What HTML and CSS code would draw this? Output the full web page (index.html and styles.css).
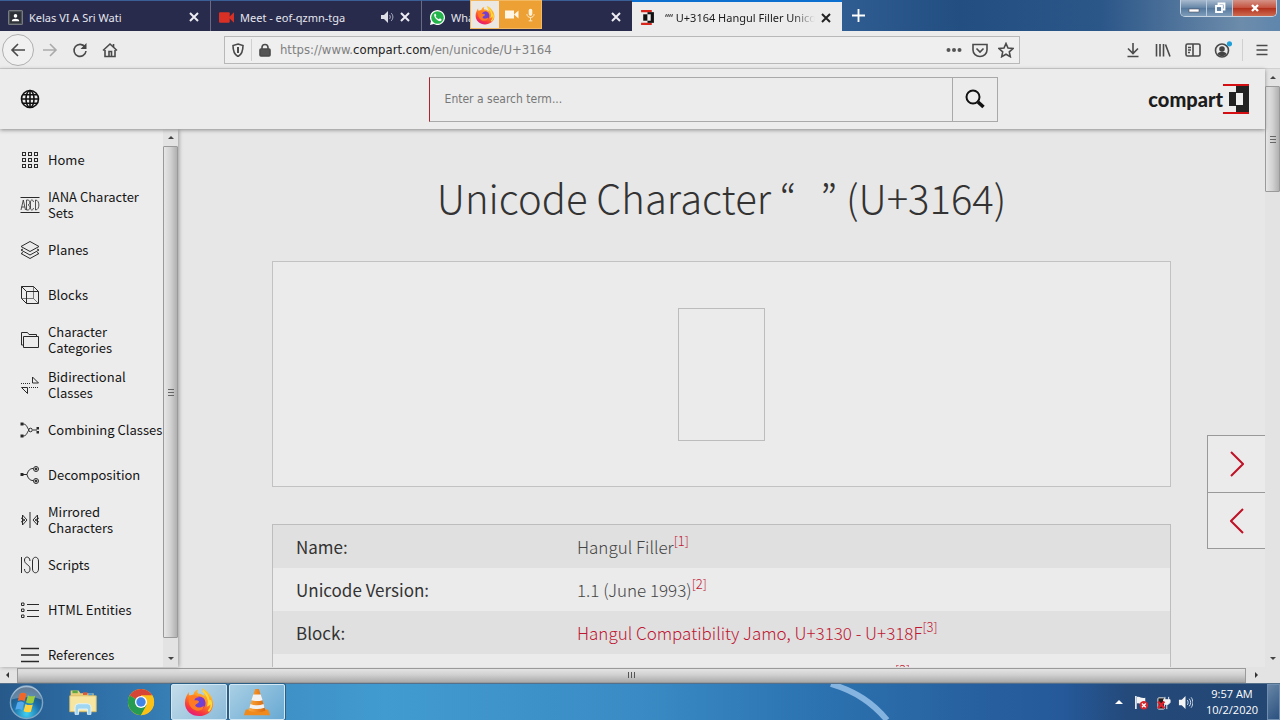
FILE: index.html
```html
<!DOCTYPE html>
<html lang="en">
<head>
<meta charset="utf-8">
<title>U+3164 Hangul Filler Unicode Character</title>
<link rel="stylesheet" href="styles.css">
</head>
<body>
<svg class="defs" width="0" height="0" aria-hidden="true">
  <defs>
    <linearGradient id="fxBody" x1="0.8" y1="0" x2="0.3" y2="1">
      <stop offset="0" stop-color="#ffd93a"/><stop offset="0.45" stop-color="#ff8a1f"/><stop offset="0.8" stop-color="#f7373f"/><stop offset="1" stop-color="#e31587"/>
    </linearGradient>
    <radialGradient id="fxGlobe"><stop offset="0" stop-color="#5a4be0"/><stop offset="1" stop-color="#8a35c4"/></radialGradient>
    <radialGradient id="orb" cx="0.5" cy="0.85" r="0.85"><stop offset="0" stop-color="#3fd0f2"/><stop offset="0.5" stop-color="#1c6ea8"/><stop offset="1" stop-color="#2a4566"/></radialGradient>
    <linearGradient id="cone" x1="0" x2="1"><stop offset="0" stop-color="#ffab3d"/><stop offset="1" stop-color="#d96508"/></linearGradient>
    <symbol id="firefox" viewBox="0 0 32 32">
      <path d="M5 5c0 2 0 3 1 4l4-1c1-3 3-5 5-5-1 2-1 3 0 4 3 0 5 1 7 3 0-4-2-6-3-9 6 3 12 9 12 17 0 8-7 13-15 13S1 25 1 17C1 12 3 9 5 5z" fill="url(#fxBody)"/>
      <circle cx="16" cy="17" r="7" fill="url(#fxGlobe)"/>
      <path d="M5 11c3-3 8-3 11 0-3 0-4 1-5 3 3 0 5 0 5 2-1 2-4 2-4 4 2 3 7 2 9 0 0 4-4 6-8 5-5-1-9-6-8-14z" fill="#ff7a22"/>
      <path d="M20 4c4 3 8 9 6 15 2-1 2-3 2-5 2 4 1 9-2 12" fill="none" stroke="#ffd93a" stroke-width="2"/>
    </symbol>
  </defs>
</svg>

<header class="tabstrip">
  <div class="tabs" role="tablist">
    <div class="tab" role="tab">
      <svg class="fav" viewBox="0 0 14 14"><rect x=".5" y=".5" width="13" height="13" rx="1" fill="#4a4e55" stroke="#777b80"/><rect x="2" y="2" width="10" height="10" fill="#2c2f36"/><circle cx="7" cy="5.500" r="1.700" fill="#fff"/><path d="M3.500 10.500c0-3 7-3 7 0z" fill="#fff"/></svg>
      <span class="tab-title">Kelas VI A Sri Wati</span>
      <button class="close" aria-label="Close tab"><svg viewBox="0 0 10 10"><path d="M1 1l8 8M9 1l-8 8"/></svg></button>
    </div>
    <div class="tab" role="tab">
      <svg class="fav" viewBox="0 0 14 14"><rect x="0" y="2" width="10" height="10" rx="1" fill="#d93025"/><path d="M9 7l5-5v10z" fill="#d93025"/></svg>
      <span class="tab-title">Meet - eof-qzmn-tga</span>
      <button class="sound" aria-label="Mute tab"><svg viewBox="0 0 14 12"><path d="M1 4h3l4-4v12l-4-4H1z" fill="#dcdde6"/><path d="M9.500 4c1 1 1 3 0 4M11 2c2.500 2 2.500 6 0 8" fill="none" stroke="#a9abc0"/></svg></button>
      <button class="close" aria-label="Close tab"><svg viewBox="0 0 10 10"><path d="M1 1l8 8M9 1l-8 8"/></svg></button>
    </div>
    <div class="tab" role="tab">
      <svg class="fav" viewBox="0 0 16 16"><path d="M0 16l1-4a8 8 0 1 1 3 3z" fill="#fff"/><circle cx="8" cy="8" r="6.700" fill="#25b34b"/><path d="M5 4c-2 2 2 8 6 8 1.500-.5 1.500-2 1-2.500l-1.500-.7-1 1C8 9.500 6.500 8 6 7l.7-1L6 4z" fill="#fff"/></svg>
      <span class="tab-title">WhatsApp</span>
      <button class="close" aria-label="Close tab"><svg viewBox="0 0 10 10"><path d="M1 1l8 8M9 1l-8 8"/></svg></button>
      <div class="sharing">
        <span class="sharing-app"><svg viewBox="0 0 32 32"><use href="#firefox"/></svg></span>
        <svg class="cam" viewBox="0 0 14 10"><path d="M0 1h9v8H0zM9 5l4.500-4v8z" fill="#fff6e6"/></svg>
        <svg class="mic" viewBox="0 0 10 14"><rect x="3" y="0" width="4" height="8" rx="2" fill="#fff0d6"/><path d="M1 6c0 5 8 5 8 0M5 10v3M3 13.500h4" fill="none" stroke="#fff0d6"/></svg>
      </div>
    </div>
    <div class="tab active" role="tab" aria-selected="true">
      <svg class="fav" viewBox="0 0 14 14"><path d="M1 1h10M1 13h10" stroke="#d9261c" stroke-width="2"/><path d="M7 2h6v10H7z" fill="#111"/><path d="M3 4h4v6H3z" fill="#111"/><path d="M7 4h3v6H7z" fill="#eee"/></svg>
      <span class="tab-title">““ U+3164 Hangul Filler Unicode</span>
      <button class="close" aria-label="Close tab"><svg viewBox="0 0 10 10"><path d="M1 1l8 8M9 1l-8 8"/></svg></button>
    </div>
  </div>
  <button class="newtab" aria-label="New tab"><svg viewBox="0 0 14 14"><path d="M7 0v14M0 7h14" stroke="#fff" stroke-width="2"/></svg></button>
  <div class="winbtns">
    <button class="win" aria-label="Minimize"><svg viewBox="0 0 14 12"><rect x="2" y="7" width="10" height="3" fill="#fff" stroke="#556" stroke-width=".6"/></svg></button>
    <button class="win" aria-label="Restore"><svg viewBox="0 0 14 12"><path d="M5.500 3V1.500h6v6H10M3 4h6v6H3z" fill="none" stroke="#fff" stroke-width="1.800"/></svg></button>
    <button class="win quit" aria-label="Close"><svg viewBox="0 0 14 12"><path d="M4 3l6 6M10 3l-6 6" stroke="#fff" stroke-width="2.400"/></svg></button>
  </div>
</header>

<nav class="toolbar" aria-label="Browser">
  <div class="tool-left">
    <button class="back" aria-label="Back"><svg viewBox="0 0 16 16"><path d="M15 8H2M8 2L2 8l6 6"/></svg></button>
    <button class="tool faded" aria-label="Forward"><svg viewBox="0 0 16 16"><path d="M1 8h13M8 2l6 6-6 6"/></svg></button>
    <button class="tool" aria-label="Reload"><svg viewBox="0 0 16 16"><path d="M13 5a6 6 0 1 0 1 4"/><path d="M14.500 1v6h-6z" fill="#444" stroke="none"/></svg></button>
    <button class="tool" aria-label="Home"><svg viewBox="0 0 16 16"><path d="M1 8.500L8 2l7 6.500M3 8v6.500h10V8"/><path d="M7 14V9.500h2.500V14M11.500 2v3"/></svg></button>
  </div>
  <div class="urlbar">
    <svg class="ui" viewBox="0 0 14 14"><path d="M7 1l5 1.500c0 6-1 9-5 11-4-2-5-5-5-11z"/><path d="M7 4v6" stroke-width="2"/></svg>
    <span class="vsep"></span>
    <svg class="ui" viewBox="0 0 14 14"><rect x="2" y="6" width="10" height="7" rx="1" fill="#555"/><path d="M4 6V4.500a3 3 0 0 1 6 0V6"/></svg>
    <span class="url">https://www.<b>compart.com</b>/en/unicode/U+3164</span>
    <button class="mini wide" aria-label="Page actions"><svg viewBox="0 0 16 16"><g fill="#555" stroke="none"><circle cx="2.500" cy="8" r="2"/><circle cx="8" cy="8" r="2"/><circle cx="13.500" cy="8" r="2"/></g></svg></button>
    <button class="mini" aria-label="Save to Pocket"><svg viewBox="0 0 16 16"><path d="M1 2.500h14V8a7 6.500 0 0 1-14 0zM4.500 6.500L8 10l3.500-3.500"/></svg></button>
    <button class="mini" aria-label="Bookmark"><svg viewBox="0 0 16 16"><path d="M8 1.500l2 4.500 5 .5-3.700 3.300 1 4.900L8 12.200l-4.300 2.500 1-4.900L1 6.500 6 6z"/></svg></button>
  </div>
  <div class="tool-right">
    <button class="tool" aria-label="Downloads"><svg viewBox="0 0 16 16"><path d="M8 1v10M3 6.500l5 5 5-5M2.500 14.500h11"/></svg></button>
    <button class="tool" aria-label="Library"><svg viewBox="0 0 16 16"><path d="M1.500 2v12.500M5 2v12.500M8.500 2v12.500M10.500 2.500l4.500 12"/></svg></button>
    <button class="tool" aria-label="Sidebars"><svg viewBox="0 0 16 16"><rect x="1" y="2" width="14" height="12" rx="1.500"/><path d="M8 2v12M3 5.500h3M3 8h3M3 10.500h2"/></svg></button>
    <button class="tool" aria-label="Account"><svg viewBox="0 0 18 18"><circle cx="8" cy="9.500" r="6.500"/><circle cx="8" cy="8" r="2.800" fill="#444" stroke="none"/><path d="M3.500 13c1-3 8-3 9 0-3 3-6 3-9 0z" fill="#444" stroke="none"/><circle cx="15.500" cy="2.800" r="2.600" fill="#1e9fd8" stroke="none"/></svg></button>
    <span class="vsep"></span>
    <button class="tool" aria-label="Menu"><svg viewBox="0 0 16 16"><path d="M2.500 3.500h11M2.500 8h11M2.500 12.500h11"/></svg></button>
  </div>
</nav>

<div class="viewport">
  <div class="page">
    <header class="site-head">
      <button class="lang" aria-label="Language"><svg viewBox="0 0 20 20"><circle cx="10" cy="10" r="8.500"/><ellipse cx="10" cy="10" rx="4" ry="8.500"/><path d="M10 1.500v17M1.500 10h17M3 5.800h14M3 14.200h14"/></svg></button>
      <form class="search">
        <input type="text" placeholder="Enter a search term..." aria-label="Search term">
        <button type="button" aria-label="Search"><svg viewBox="0 0 20 20"><circle cx="8" cy="8" r="6.500" fill="none" stroke="#111" stroke-width="2"/><path d="M13 13l5.500 5" stroke="#111" stroke-width="3.600"/></svg></button>
      </form>
      <a class="brand" href="#">compart<svg viewBox="0 0 26 30"><path d="M13 1h13v28H13z" fill="#222"/><path d="M0 1h26M0 29h26" stroke="#d40f14" stroke-width="2"/><path d="M6 8h7v14H6z" fill="#222"/><path d="M13 9h7v12h-7z" fill="#efefef"/></svg></a>
    </header>

    <div class="columns">
      <aside class="side">
        <nav class="side-nav">
          <a href="#"><svg viewBox="0 0 20 20"><g><rect x="2.500" y="2.500" width="3" height="3"/><rect x="8.500" y="2.500" width="3" height="3"/><rect x="14.500" y="2.500" width="3" height="3"/><rect x="2.500" y="8.500" width="3" height="3"/><rect x="8.500" y="8.500" width="3" height="3"/><rect x="14.500" y="8.500" width="3" height="3"/><rect x="2.500" y="14.500" width="3" height="3"/><rect x="8.500" y="14.500" width="3" height="3"/><rect x="14.500" y="14.500" width="3" height="3"/></g></svg><span>Home</span></a>
          <a href="#"><svg viewBox="0 0 20 20"><path d="M.5 2.500h19M.5 17.500h19"/><path stroke-width=".8" d="M1 15L3.300 5l2.200 10M1.800 12h3M6.500 5v10h1.500c2.500 0 2.500-5 0-5 2.200 0 2.200-5 0-5zM13.500 7c-.5-3-3-2.500-3 0v6c0 2.500 2.500 3 3 0M15.500 5v10c4.500 0 4.500-10 0-10z"/></svg><span>IANA Character Sets</span></a>
          <a href="#"><svg viewBox="0 0 20 20"><path d="M10 1.500l9 5-9 5-9-5zM1 10l9 5 9-5M1 13.500l9 5 9-5M1 10l2-1M19 10l-2-1M1 13.500l2-1M19 13.500l-2-1"/></svg><span>Planes</span></a>
          <a href="#"><svg viewBox="0 0 20 20"><path d="M6.500 6.500h12v12h-12zM1.500 1.500h12l5 5M1.500 1.500v12l5 5M1.500 1.500l5 5"/><path stroke-width=".6" d="M13.500 1.500v12h-12M13.500 13.500l5 5"/></svg><span>Blocks</span></a>
          <a href="#"><svg viewBox="0 0 20 20"><path d="M3.500 6.500h15v11h-15zM3.500 15H1.500V2.500h6l1.500 2h7.500v2"/></svg><span>Character Categories</span></a>
          <a href="#"><svg viewBox="0 0 20 20"><path d="M12.500 2v6h6zM1.500 12.500h6v6z"/><path stroke-dasharray="1 1" d="M1 8.500h10M9 12.500h10"/></svg><span>Bidirectional Classes</span></a>
          <a href="#"><svg viewBox="0 0 20 20"><path d="M3 4c4 0 4 4 6 6-2 2-2 6-6 6M13 10h4"/><circle cx="10.500" cy="10" r="1.800"/><g fill="#222"><rect x="1" y="3" width="2" height="2"/><rect x="1" y="15" width="2" height="2"/><rect x="17" y="7.500" width="1.500" height="1.500"/><rect x="17" y="11.500" width="1.500" height="1.500"/></g></svg><span>Combining Classes</span></a>
          <a href="#"><svg viewBox="0 0 20 20"><path d="M3 9.500h4c1-4 3-6 6-6M7 9.500c1 4 3 6 6 6"/><rect x="1" y="8.500" width="2" height="2" fill="#222"/><circle cx="16" cy="4" r="2.500"/><circle cx="16" cy="4" r="1" fill="#222"/><circle cx="16" cy="16" r="2.500"/><circle cx="16" cy="16" r="1" fill="#222"/></svg><span>Decomposition</span></a>
          <a href="#"><svg viewBox="0 0 20 20"><path d="M10 2v16M2.500 5l4.500 5-4.500 5zM17.500 5L13 10l4.500 5zM1 8l4 2-4 2M19 8l-4 2 4 2"/></svg><span>Mirrored Characters</span></a>
          <a href="#"><svg viewBox="0 0 20 20"><path d="M1.500 2v16M10 6c0-5-5.500-5-5.500-1 0 5 5.500 4 5.500 9 0 5-5.500 5-5.500 0M12.500 6c0-5 6-5 6 0v8c0 5-6 5-6 0z"/></svg><span>Scripts</span></a>
          <a href="#"><svg viewBox="0 0 20 20"><path d="M7 4.500h12M7 10.500h12M7 16.500h12"/><path d="M1.500 3h2.500v2.500H1.500zM1.500 9h2.500v2.500H1.500zM1.500 15h2.500v2.500H1.500z"/></svg><span>HTML Entities</span></a>
          <a href="#"><svg viewBox="0 0 20 20"><path d="M1 3.500h18M1 10h18M1 16.500h18" stroke-width="1.400"/></svg><span>References</span></a>
        </nav>
        <div class="vbar">
          <i class="arrow up"></i>
          <div class="vthumb long"><i></i></div>
          <i class="arrow down"></i>
        </div>
      </aside>

      <main class="content">
        <h1>Unicode Character “<span class="filler"></span>” (U+3164)</h1>
        <div class="glyph-card"><div class="glyph"></div></div>
        <table class="facts">
          <tbody>
            <tr><th scope="row">Name:</th><td>Hangul Filler<sup><a href="#">[1]</a></sup></td></tr>
            <tr><th scope="row">Unicode Version:</th><td>1.1 (June 1993)<sup><a href="#">[2]</a></sup></td></tr>
            <tr><th scope="row">Block:</th><td><a href="#">Hangul Compatibility Jamo, U+3130 - U+318F</a><sup><a href="#">[3]</a></sup></td></tr>
            <tr><th scope="row">Plane:</th><td><a href="#">Basic Multilingual Plane, U+0000 - U+FFFF</a><sup><a href="#">[3]</a></sup></td></tr>
          </tbody>
        </table>
      </main>
    </div>
    <div class="pager">
      <button aria-label="Next character"><svg viewBox="0 0 14 26"><path d="M1 1l12 12L1 25"/></svg></button>
      <button aria-label="Previous character"><svg viewBox="0 0 14 26"><path d="M13 1L1 13l12 12"/></svg></button>
    </div>
  </div>
  <div class="vbar outer">
    <i class="arrow up"></i>
    <div class="vthumb short"><i></i></div>
    <i class="arrow down"></i>
  </div>
</div>
<div class="hbar">
  <i class="arrow left"></i>
  <div class="hthumb"><i></i></div>
  <i class="arrow right"></i>
</div>

<footer class="taskbar">
  <svg class="streak" viewBox="0 0 120 37" preserveAspectRatio="none"><path d="M12 0c26 8 42 20 56 37" fill="none" stroke="#9cc6ee" stroke-width="6" opacity=".8"/></svg>
  <button class="start" aria-label="Start"><svg viewBox="0 0 36 36"><circle cx="18" cy="18" r="16.500" fill="url(#orb)" stroke="#7fa5c4" stroke-width="1.500"/><path d="M3 15a15 15 0 0 1 30 0c-8-4-20-3-30 0z" fill="#fff" opacity=".28"/><path d="M11 9c3-1.500 5-1 7 .5l-2 7.500c-2-1.500-4-2-7-.5z" fill="#f0672a"/><path d="M19.500 10.500c2 1.500 5 1.500 7.500.5l-2 7.500c-3 1-5 .5-7.500-.5z" fill="#9ccc3c"/><path d="M8.500 18c3-1.500 5-1 7 .5l-2 7.500c-2-1.500-4-2-7-.5z" fill="#54a8ec"/><path d="M17 19.500c2 1.500 5 1.500 7.500.5l-2 7.500c-3 1-5 .5-7.500-.5z" fill="#ffd23e"/></svg></button>
  <button class="task" aria-label="Explorer"><svg viewBox="0 0 34 32"><path d="M3 3h9l2 3h15v20H3z" fill="#e9cf7a"/><path d="M5 3h6v3H5z" fill="#5ba844"/><path d="M17 5h5v3h-5z" fill="#d95a3b"/><path d="M23 6h5v3h-5z" fill="#4c9bd6"/><path d="M2 9h30v18H2z" fill="#f6e6a2" stroke="#d9bb62"/><path d="M8 30v-8q0-4 4-4h10q4 0 4 4v8h-4v-6H12v6z" fill="#9fd6f2" stroke="#e5f6ff"/></svg></button>
  <button class="task" aria-label="Chrome"><svg viewBox="0 0 32 32"><circle cx="16" cy="16" r="14" fill="#fbc116"/><path d="M16 16L3.900 9A14 14 0 0 1 28.100 9H16z" fill="#d64535"/><path d="M3.900 9A14 14 0 0 0 16 30l6-10.500-6-3.500z" fill="#269b52"/><path d="M28.100 9A14 14 0 0 1 16 30l6-10.500L16 9z" fill="#fbc116"/><circle cx="16" cy="16" r="6.500" fill="#fff"/><circle cx="16" cy="16" r="5" fill="#4285e8"/></svg></button>
  <button class="task open" aria-label="Firefox"><svg viewBox="0 0 32 32"><use href="#firefox"/></svg></button>
  <button class="task open" aria-label="VLC"><svg viewBox="0 0 32 32"><path d="M4 24h24l2 6H2z" fill="#f08a1c"/><path d="M14 2h4l7 23q-9 4-18 0z" fill="url(#cone)"/><path d="M12 8h8l2 6q-6 2-12 0zM9 18q7 3 14 0l1 4q-8 3-16 0z" fill="#f2f2f2"/></svg></button>
  <div class="tray">
    <svg class="ti small" viewBox="0 0 8 8"><path d="M4 2l4 4H0z" fill="#fff"/></svg>
    <svg class="ti" viewBox="0 0 16 16"><path d="M2 1v14" stroke="#fff" stroke-width="1.600"/><path d="M3 2c4-1 4 2 9 1v7c-5 1-5-2-9-1z" fill="#f4f4f4"/><circle cx="10.500" cy="11" r="4.500" fill="#d8282c"/><path d="M8.500 9l4 4M12.500 9l-4 4" stroke="#fff" stroke-width="1.400"/></svg>
    <svg class="ti" viewBox="0 0 16 16"><rect x="2" y="3" width="7" height="12" rx="1" fill="#222" stroke="#eee"/><path d="M8 5h7v3l-2 2h-3l-2-2zM9.500 5V2M13.500 5V2M11.500 10v5" fill="#f4f4f4" stroke="#f4f4f4"/><path d="M2 7l7 7M9 7l-7 7" stroke="#e0202a" stroke-width="2.400"/></svg>
    <svg class="ti" viewBox="0 0 16 16"><path d="M1 5h3l4-4v14l-4-4H1z" fill="#f4f4f4"/><path d="M10 5.500c1 1.500 1 3.500 0 5M12 4c2 2.500 2 5.500 0 8M14 2.500c2.500 3.500 2.500 7.500 0 11" fill="none" stroke="#dfe8f2"/></svg>
    <time class="clock"><span>9:57 AM</span><span>10/2/2020</span></time>
    <button class="peek" aria-label="Show desktop"></button>
  </div>
</footer>
</body>
</html>
```
FILE: styles.css
```css
* { box-sizing: border-box; }

html, body { height: 100%; }

body {
  margin: 0;
  display: flex;
  flex-direction: column;
  overflow: hidden;
  background: #e7e7e7;
  color: #333;
  font-family: "Noto Sans CJK KR", "Open Sans", sans-serif;
}

button {
  margin: 0;
  padding: 0;
  border: 0;
  background: none;
  display: grid;
  place-items: center;
  flex: none;
}

a { color: inherit; text-decoration: none; }
svg { display: block; flex: none; }
.defs { position: absolute; }

/* Tab strip */
.tabstrip {
  flex: none;
  height: 31px;
  display: flex;
  align-items: stretch;
  background: linear-gradient(90deg, #2f5c91 66%, #224e82 75%, #2b5688 86%, #6d8cab 97%, #5f86ad);
}

.tabs { display: flex; flex: 0 1 842px; min-width: 0; }

.tab {
  position: relative;
  flex: 1 1 0;
  min-width: 0;
  display: flex;
  align-items: center;
  gap: 6px;
  padding: 2px 11px 0 8px;
  background: #282b4c;
  border-top: 1px solid #3a5f96;
  border-right: 1px solid #696b85;
  color: #e6e6ee;
  font: 11px "Noto Sans", sans-serif;
}

.tab:nth-child(3) { border-right: 0; }

.tab.active {
  background: #ececec;
  color: #1b1b1b;
  border-top: 2px solid #0a6fce;
  border-right: 0;
}

.fav { width: 15px; height: 15px; }
.active .fav { margin-right: 4px; }

.tab-title {
  flex: 1;
  min-width: 0;
  overflow: hidden;
  white-space: nowrap;
}

.active .tab-title { mask-image: linear-gradient(90deg, #000 85%, transparent); }

.close svg { width: 10px; height: 10px; stroke: #ececf2; stroke-width: 2; }
.active .close svg { stroke: #222; }
.sound svg { width: 14px; height: 12px; }

.sharing {
  position: absolute;
  left: 48px;
  top: -1px;
  height: 29px;
  width: 72px;
  display: flex;
  align-items: center;
  background: #eda135;
  border: 1px solid #f2b862;
}

.sharing-app { width: 28px; height: 27px; display: grid; place-items: center; background: #ebe7e3; }
.sharing-app svg { width: 20px; height: 20px; }
.cam { width: 14px; height: 11px; margin: 0 7px 0 6px; }
.mic { width: 9px; height: 14px; }

.newtab { width: 32px; }
.newtab svg { width: 13px; height: 13px; }

.winbtns {
  margin-left: auto;
  margin-right: 3px;
  height: 17px;
  display: flex;
  border: 1px solid #c6d4e2;
  border-top: 0;
  border-radius: 0 0 5px 5px;
  overflow: hidden;
}

.win { width: 26px; background: linear-gradient(#a9bbcf, #6484a6 50%, #54779c 51%, #7f9dba); border-right: 1px solid #b9cadb; }
.win svg { width: 14px; height: 12px; }
.quit { width: 43px; border: 0; background: linear-gradient(#d59286, #c4513d 50%, #b2301c 51%, #cd6a4f); }

/* Browser toolbar */
.toolbar {
  flex: none;
  height: 38px;
  display: flex;
  align-items: center;
  background: #ececec;
  border-bottom: 1px solid #d0d0d0;
}

.toolbar svg { fill: none; stroke: #4a4a4a; stroke-width: 1.6; }
.tool-left { display: flex; align-items: center; gap: 2px; padding-left: 2px; flex: 13 1 0; }
.tool { width: 28px; height: 28px; }
.tool svg { width: 16px; height: 16px; }
.faded { opacity: .4; }

.back {
  width: 32px;
  height: 32px;
  border: 1px solid #b0b0b0;
  border-radius: 50%;
  background: #f1f1f1;
}

.back svg { width: 16px; height: 16px; }

.urlbar {
  flex: 0 1 796px;
  height: 28px;
  display: flex;
  align-items: center;
  padding: 0 0 0 6px;
  background: #efefef;
  border: 1px solid #b8b8b8;
}

.ui { width: 14px; height: 14px; }
.vsep { width: 1px; height: 22px; margin: 0 6px; background: #d0d0d0; }
.url { flex: 1; margin-left: 8px; font: 13px "DejaVu Sans Condensed", sans-serif; color: #808080; white-space: nowrap; }
.url b { font-weight: 400; color: #222; }
.mini { width: 26px; height: 26px; }
.mini svg { width: 16px; height: 16px; }

.tool-right { flex: 15 1 0; display: flex; align-items: center; justify-content: flex-end; gap: 2px; padding-right: 4px; }
.tool-right .vsep { margin: 0 3px; }
.tool-right .tool:nth-child(4) svg { width: 18px; height: 18px; }

/* Page */
.viewport { flex: 1; min-height: 0; display: flex; }

.page {
  position: relative;
  flex: 1;
  min-width: 0;
  display: flex;
  flex-direction: column;
}

.site-head {
  flex: none;
  height: 60px;
  display: grid;
  grid-template-columns: 13fr minmax(0, 569px) 8fr;
  align-items: center;
  padding: 0 16px 0 20px;
  background: #ececec;
  box-shadow: 0 1px 4px #8a8a8a;
  z-index: 2;
}

.lang { justify-self: start; }
.lang svg { width: 20px; height: 20px; fill: none; stroke: #111; stroke-width: 1.6; }

.search { display: flex; height: 45px; min-width: 0; margin: 0; }

.search input {
  flex: 1;
  min-width: 0;
  padding: 0 15px;
  border: 1px solid #a9a9a9;
  border-left-color: #b5202e;
  border-radius: 0;
  background: #ececec;
  font: 12px "DejaVu Sans Condensed", "Noto Sans", sans-serif;
  outline: 0;
}

.search input::placeholder { color: #777; opacity: 1; }
.search button { width: 45px; border: 1px solid #a9a9a9; border-left: 0; }
.search button svg { width: 20px; height: 20px; }

.brand {
  justify-self: end;
  display: flex;
  align-items: center;
  color: #1c1c1c;
  font: 900 20px Lato, sans-serif;
}

.brand svg { width: 26px; height: 30px; }

.columns { flex: 1; min-height: 0; display: flex; }

.side {
  flex: none;
  width: 178px;
  display: flex;
  background: #ececec;
  box-shadow: 1px 0 4px #9a9a9a;
  z-index: 1;
}

.side-nav {
  flex: 1;
  min-width: 0;
  overflow: hidden;
  padding-top: 8px;
  color: #151515;
  font-size: 13px;
  line-height: 16px;
}

.side-nav a { display: flex; align-items: center; height: 45px; padding-left: 20px; gap: 8px; }
.side-nav span { width: 116px; flex: none; }
.side-nav svg { width: 20px; height: 20px; fill: none; stroke: #2a2a2a; stroke-width: 1; }

/* Scroll bars */
.vbar { flex: none; width: 15px; display: flex; flex-direction: column; background: #e3e3e3; }

.vthumb {
  flex: 1;
  display: grid;
  place-items: center;
  border: 1px solid #9a9a9a;
  border-radius: 1px;
  background: linear-gradient(90deg, #e6e6e6, #d2d2d2 50%, #b0b0b0);
}

.long { margin-bottom: 12px; }
.short { flex: none; height: 106px; margin-bottom: auto; }
.vthumb i { width: 6px; height: 7px; background: repeating-linear-gradient(#666 0 1px, transparent 1px 3px); }

.arrow { flex: none; display: grid; place-items: center; width: 15px; height: 17px; }
.arrow::before { content: ""; border: 3px solid transparent; }
.up::before { border-top: 0; border-bottom-color: #444; }
.down::before { border-bottom: 0; border-top-color: #444; }
.left::before { border-left: 0; border-right-color: #333; }
.right::before { border-right: 0; border-left-color: #333; }

.hbar { flex: none; height: 16px; padding-right: 16px; display: flex; align-items: center; background: #e3e3e3; }

.hthumb {
  flex: 1;
  height: 15px;
  margin: 0 3px 0 2px;
  display: grid;
  place-items: center;
  border: 1px solid #9a9a9a;
  background: linear-gradient(#e4e4e4, #d0d0d0 45%, #ababab);
}

.hthumb i { width: 7px; height: 6px; background: repeating-linear-gradient(90deg, #555 0 1px, transparent 1px 3px); }

/* Character details */
.content { flex: 1; min-width: 0; overflow: hidden; padding: 30px 94px 0; }

h1 {
  margin: 0 0 26px;
  text-align: center;
  font-size: 40px;
  font-weight: 300;
  line-height: 76px;
  color: #333;
  white-space: nowrap;
}

.filler { display: inline-block; width: 24px; }

.glyph-card {
  height: 226px;
  display: grid;
  place-items: center;
  background: #ebebeb;
  border: 1px solid #c2c2c2;
}

.glyph { width: 87px; height: 133px; border: 1px solid #bcbcbc; }

.facts {
  width: 100%;
  margin-top: 37px;
  border-collapse: separate;
  border-spacing: 0;
  border: 1px solid #bdbdbd;
  table-layout: fixed;
  font-size: 17px;
  line-height: 24px;
}

.facts th, .facts td { height: 43px; padding: 0 0 0 23px; text-align: left; vertical-align: middle; }
.facts th { width: 281px; font-weight: 400; }
.facts td { font-weight: 300; color: #444; }
.facts tr:nth-child(odd) { background: #e0e0e0; }
.facts tr:nth-child(even) { background: #ebebeb; }
.facts a { color: #bf1732; }
.facts sup { font-size: 13px; line-height: 0; vertical-align: 8px; }

.pager { position: absolute; right: 0; top: 366px; width: 58px; border: 1px solid #999; border-right: 0; background: #ebebeb; }
.pager button { width: 100%; height: 56px; }
.pager button + button { border-top: 1px solid #999; }
.pager svg { width: 14px; height: 26px; fill: none; stroke: #bf1226; stroke-width: 2; }

/* Taskbar */
.taskbar {
  position: relative;
  flex: none;
  height: 37px;
  display: flex;
  align-items: stretch;
  gap: 2px;
  border-top: 1px solid #55708a;
  background: linear-gradient(90deg, #27598a, #2c6ba3 6%, #3d8bc0 18%, #419bd0 30%, #3a8bc5 50%, #2c74b2 63%, #2862a0 75%, #25599a 83%, #244a7b 88%, #234672);
}

.streak { position: absolute; left: 64%; top: 0; width: 120px; height: 36px; }
.start { width: 53px; }
.start svg { width: 35px; height: 35px; }
.task { width: 56px; border-radius: 2px; }
.task svg { width: 30px; height: 30px; }
.open { border: 1px solid #d3e8f5; box-shadow: 0 0 0 1px #2b5f86; background: linear-gradient(135deg, #c4dcea, #8bbbd9); }
.open + .open { background: linear-gradient(135deg, #a9cfe4, #68a9d3); }

.tray { margin-left: auto; display: flex; align-items: center; gap: 7px; }
.ti { width: 15px; height: 15px; }
.small { width: 8px; height: 8px; margin-right: 4px; }

.clock {
  width: 56px;
  margin-left: 4px;
  display: flex;
  flex-direction: column;
  align-items: center;
  color: #fff;
  font: 11px "Open Sans", sans-serif;
  line-height: 16px;
}

.peek { width: 13px; align-self: stretch; border: 1px solid #6f8eb0; background: linear-gradient(135deg, #6886a6, #2b517f); }
```
